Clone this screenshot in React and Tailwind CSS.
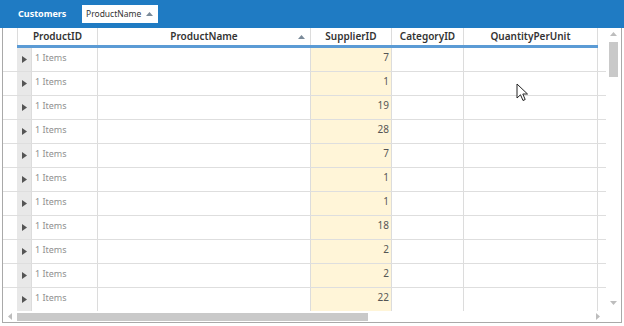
import React from 'react'

const rows = [7, 1, 19, 28, 7, 1, 1, 18, 2, 2, 22]

const cols = [
    { name: 'ProductID', w: 'w-[81px]' },
    { name: 'ProductName', w: 'w-[213px]', sorted: true },
    { name: 'SupplierID', w: 'w-[81px]' },
    { name: 'CategoryID', w: 'w-[72px]' },
    { name: 'QuantityPerUnit', w: 'w-[134px]' },
]

const font = { fontFamily: '"Noto Sans", "Open Sans", Arial, sans-serif' }

const SortUp = ({ className = '' }) => (
    <svg width="7" height="4" viewBox="0 0 7 4" className={className}>
        <path d="M0 4 L3.5 0 L7 4 Z" fill="#7a8a99" />
    </svg>
)

const Expander = () => (
    <svg width="5" height="7" viewBox="0 0 5 7">
        <path d="M0 0 L5 3.5 L0 7 Z" fill="#555" />
    </svg>
)

const Cursor = () => (
    <svg width="13" height="19" viewBox="0 0 13 19" className="absolute left-[516px] top-[83px]">
        <path d="M1 1 L1 15 L4.5 11.8 L7 17.5 L9.2 16.5 L6.8 11 L11.5 11 Z" fill="#fff" stroke="#222" strokeWidth="1" strokeLinejoin="round" />
    </svg>
)

export default function App() {
    return (
        <div className="relative w-[624px] h-[326px] bg-white overflow-hidden" style={font}>
            {/* group panel */}
            <div className="h-[28px] bg-[#1f7bc3] flex items-center pl-[18px] gap-[17px]">
                <span className="w-[47px] text-[9px] font-bold text-white">Customers</span>
                <div className="h-[18px] w-[76px] bg-white flex items-center pl-[4px]">
                    <span className="text-[8.5px] text-[#333]">ProductName</span>
                    <SortUp className="ml-auto mr-[5px]" />
                </div>
            </div>

            {/* grid body */}
            <div className="ml-[2px] w-[620px] h-[295px] border-l border-r border-b border-[#a9a9a9] flex flex-col">
                <div className="flex h-[283px]">
                    <div className="w-[603px] flex flex-col overflow-hidden">
                        {/* header */}
                        <div className="flex h-[17px] shrink-0">
                            <div className="w-[14px] shrink-0" />
                            {cols.map((c, i) => (
                                <div
                                    key={c.name}
                                    className={`${c.w} shrink-0 relative flex items-center justify-center text-[10px] font-semibold text-[#333] ${i === 0 ? 'border-l' : ''} border-r border-[#dcdcdc]`}
                                >
                                    {c.name}
                                    {c.sorted && <SortUp className="absolute right-[5px] top-[7px]" />}
                                </div>
                            ))}
                        </div>
                        <div className="flex h-[3px] shrink-0">
                            <div className="w-[14px] shrink-0" />
                            <div className="w-[581px] bg-[#5b9bd5]" />
                        </div>

                        {/* rows */}
                        {rows.map((v, i) => (
                            <div key={i} className="flex h-[24px] shrink-0 border-b border-[#dedede]">
                                <div className="w-[14px] shrink-0" />
                                <div className="w-[14px] shrink-0 bg-[#e8e8e8] flex items-center justify-center">
                                    <Expander />
                                </div>
                                <div className="w-[67px] shrink-0 border-l border-r border-[#dcdcdc] pl-[3px] pt-[4px] leading-[12px] text-[9px] text-[#909090]">
                                    1 Items
                                </div>
                                <div className="w-[213px] shrink-0 border-r border-[#dcdcdc]" />
                                <div className="w-[81px] shrink-0 border-r border-[#dcdcdc] bg-[#fff5d8] text-right pr-[2px] pt-[2px] leading-[14px] text-[10px] text-[#555]">
                                    {v}
                                </div>
                                <div className="w-[72px] shrink-0 border-r border-[#dcdcdc]" />
                                <div className="w-[134px] shrink-0 border-r border-[#dcdcdc]" />
                            </div>
                        ))}
                    </div>

                    {/* vertical scrollbar */}
                    <div className="w-[15px] flex flex-col items-center pt-[4px]">
                        <svg width="7" height="4" viewBox="0 0 7 4"><path d="M0 4 L3.5 0 L7 4 Z" fill="#bdbdbd" /></svg>
                        <div className="mt-[6px] w-[9px] h-[35px] bg-[#c9c9c9]" />
                        <div className="flex-1" />
                        <svg width="7" height="4" viewBox="0 0 7 4" className="mb-[6px]"><path d="M0 0 L3.5 4 L7 0 Z" fill="#bdbdbd" /></svg>
                    </div>
                </div>

                {/* horizontal scrollbar */}
                <div className="flex items-center h-[11px]">
                    <div className="w-[14px] flex justify-center">
                        <svg width="4" height="7" viewBox="0 0 4 7"><path d="M4 0 L0 3.5 L4 7 Z" fill="#bdbdbd" /></svg>
                    </div>
                    <div className="w-[351px] h-[8px] bg-[#c9c9c9]" />
                    <div className="w-[226px]" />
                    <div className="w-[8px] flex justify-center">
                        <svg width="4" height="7" viewBox="0 0 4 7"><path d="M0 0 L4 3.5 L0 7 Z" fill="#bdbdbd" /></svg>
                    </div>
                </div>
            </div>

            <Cursor />
        </div>
    )
}
